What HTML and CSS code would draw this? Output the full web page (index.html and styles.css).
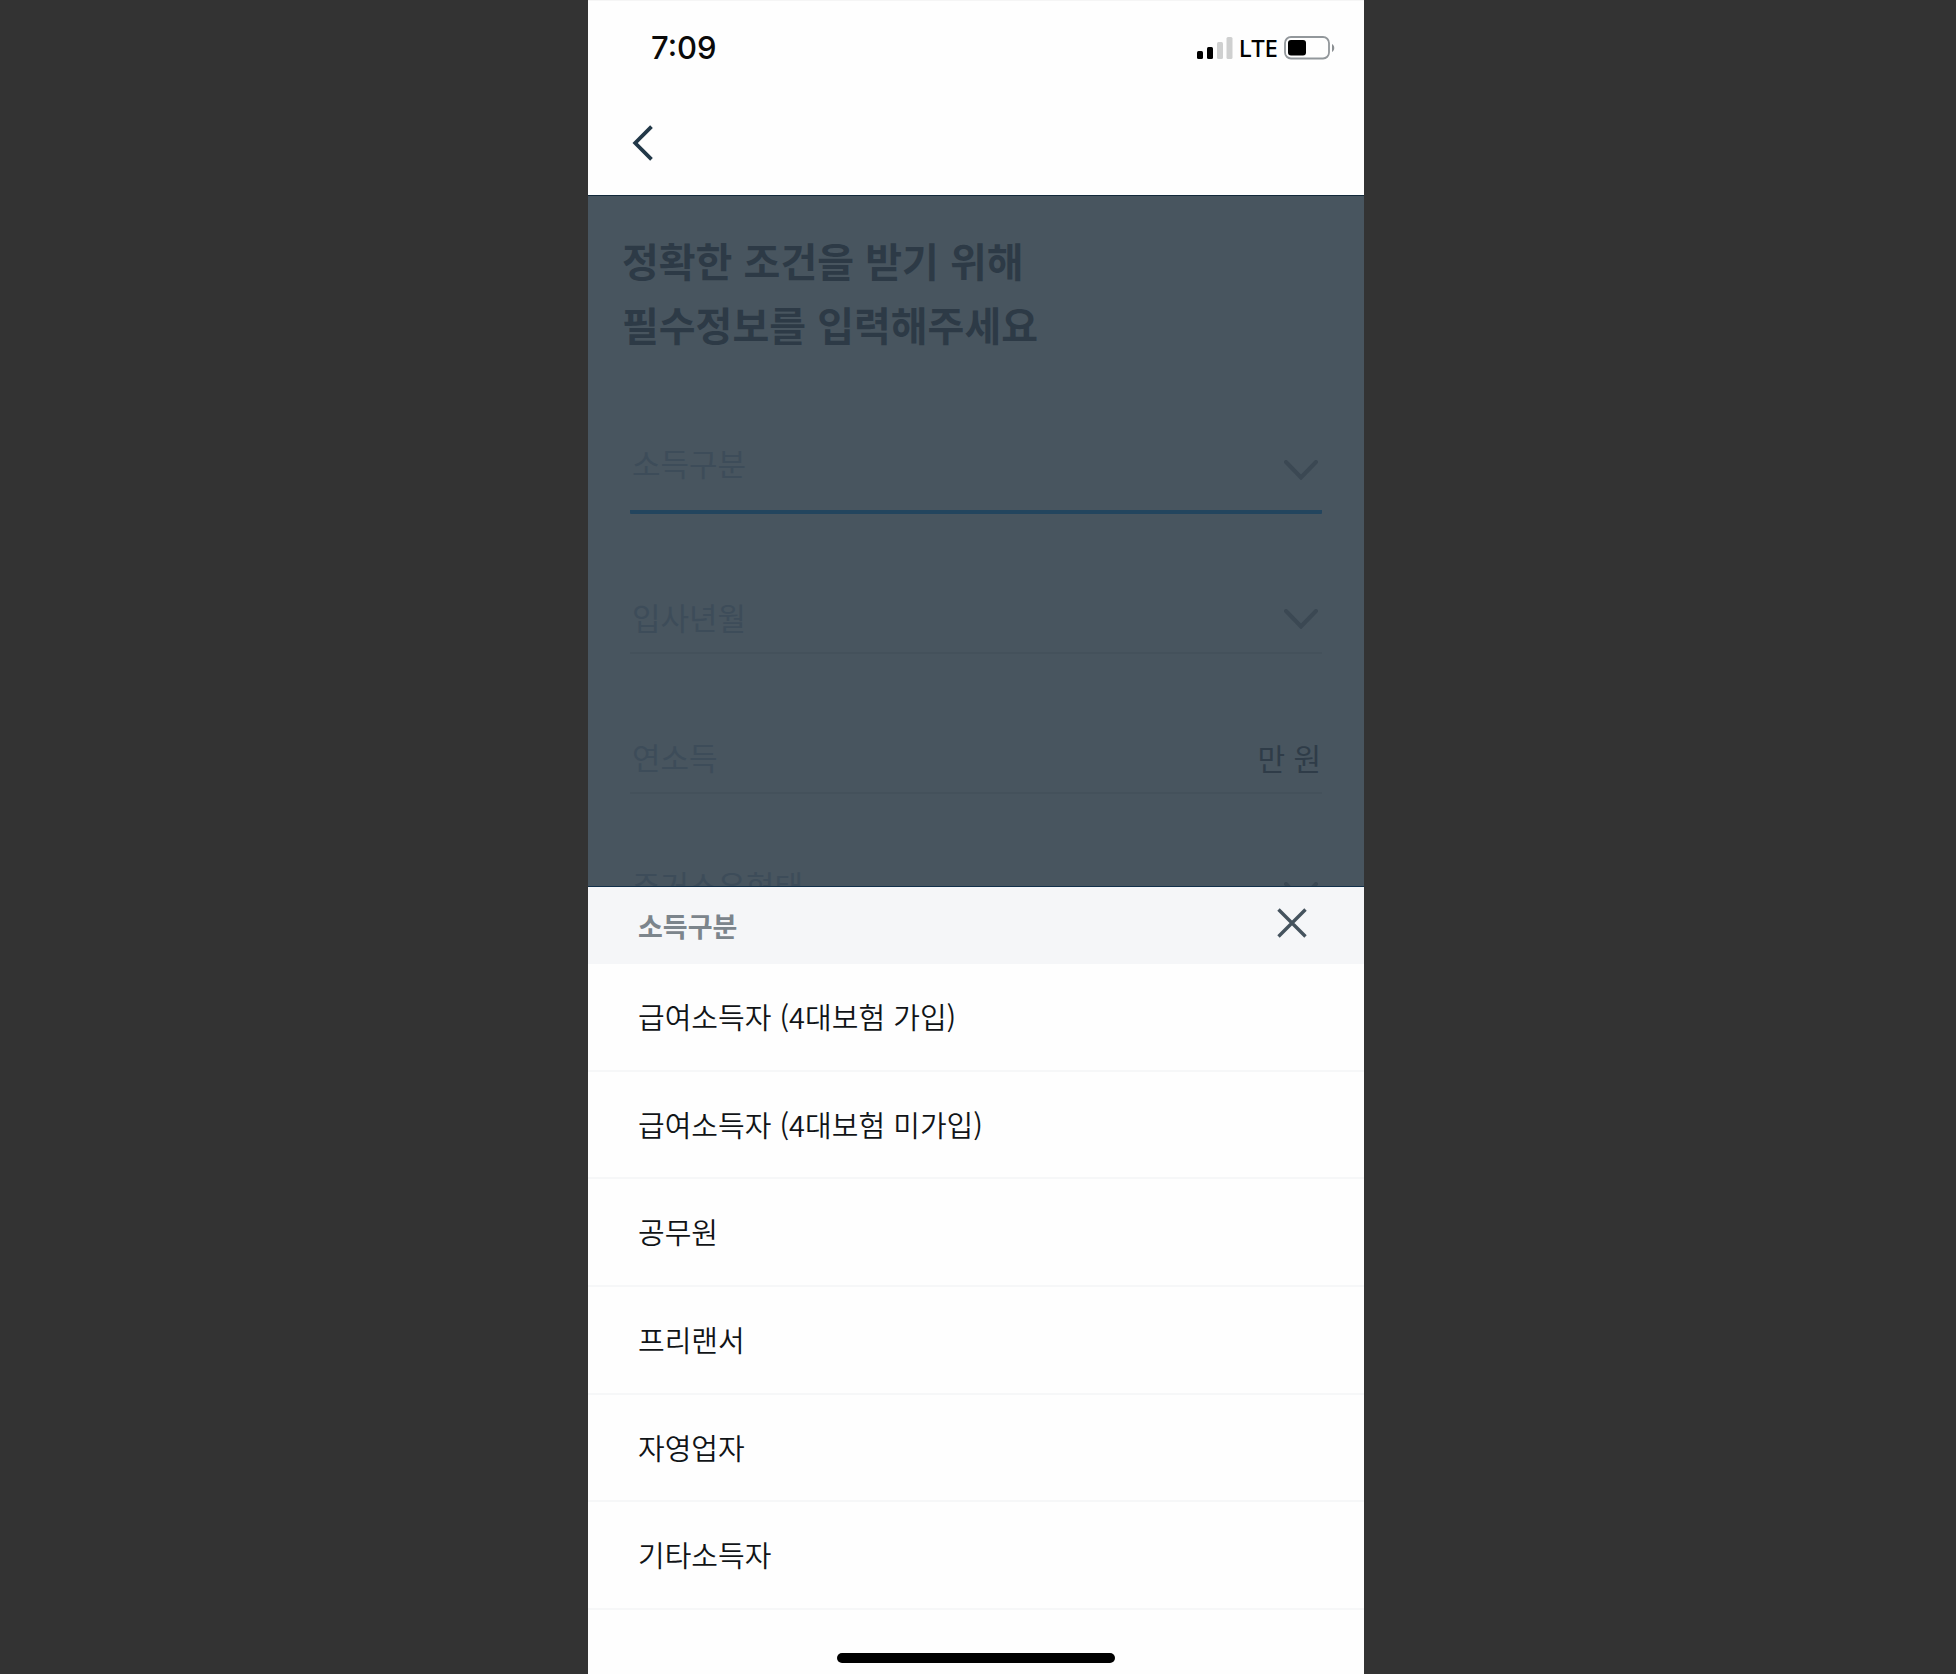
FILE: index.html
```html
<!DOCTYPE html>
<html lang="ko">
<head>
<meta charset="utf-8">
<meta name="viewport" content="width=device-width, initial-scale=1">
<title>필수정보 입력</title>
<link rel="stylesheet" href="styles.css">
</head>
<body>
<div class="phone">
  <header class="top">
    <div class="status">
      <span class="time">7:09</span>
      <div class="status-right">
        <svg width="36" height="22" viewBox="0 0 36 22" aria-hidden="true">
          <rect x="0" y="14" width="6" height="8" rx="1.5" fill="#000"/>
          <rect x="10" y="10" width="6" height="12" rx="1.5" fill="#000"/>
          <rect x="20" y="5" width="6" height="17" rx="1.5" fill="#cfd0d0"/>
          <rect x="29.500" y="0" width="6" height="22" rx="1.5" fill="#cfd0d0"/>
        </svg>
        <span class="network">LTE</span>
        <svg width="52" height="24" viewBox="0 0 52 24" aria-hidden="true">
          <rect x="1" y="1" width="44" height="21.500" rx="6" fill="none" stroke="#92979b" stroke-width="1.800"/>
          <rect x="4" y="4" width="18" height="15.500" rx="3" fill="#000"/>
          <path d="M48 8c3 1.500 3 6.500 0 8z" fill="#8b8f92"/>
        </svg>
      </div>
    </div>
    <nav class="nav">
      <button class="icon-button" type="button" aria-label="뒤로">
        <svg width="22" height="36" viewBox="0 0 22 36" fill="none" stroke="#223848" stroke-width="3.800" aria-hidden="true"><path d="M19.500 1.700 3.200 18l16.300 16.300"/></svg>
      </button>
    </nav>
  </header>

  <main class="form-area">
    <h1 class="title">정확한 조건을 받기 위해<br>필수정보를 입력해주세요</h1>
    <form class="fields">
      <div class="field field-tall field-active">
        <select class="control" aria-label="소득구분"><option>소득구분</option></select>
        <svg class="chevron" width="34" height="20" viewBox="0 0 34 20" aria-hidden="true"><path d="M2 2l15 15.500L32 2"/></svg>
      </div>
      <div class="field">
        <select class="control" aria-label="입사년월"><option>입사년월</option></select>
        <svg class="chevron" width="34" height="20" viewBox="0 0 34 20" aria-hidden="true"><path d="M2 2l15 15.500L32 2"/></svg>
      </div>
      <div class="field field-amount">
        <input class="control" id="income" type="text" placeholder="연소득" aria-label="연소득">
        <label class="unit" for="income">만 원</label>
      </div>
      <div class="field field-tall">
        <select class="control" aria-label="주거소유형태"><option>주거소유형태</option></select>
        <svg class="chevron" width="34" height="20" viewBox="0 0 34 20" aria-hidden="true"><path d="M2 2l15 15.500L32 2"/></svg>
      </div>
    </form>
  </main>

  <div class="sheet-head">
    <h2 class="sheet-title">소득구분</h2>
    <button class="icon-button" type="button" aria-label="닫기">
      <svg width="30" height="30" viewBox="0 0 30 30" fill="none" stroke="#45535e" stroke-width="3.400" aria-hidden="true"><path d="M1.500 1.500l27 27M28.500 1.500l-27 27"/></svg>
    </button>
  </div>
  <ul class="options">
    <li class="option"><button class="option-button" type="button">급여소득자 (4대보험 가입)</button></li>
    <li class="option"><button class="option-button" type="button">급여소득자 (4대보험 미가입)</button></li>
    <li class="option"><button class="option-button" type="button">공무원</button></li>
    <li class="option"><button class="option-button" type="button">프리랜서</button></li>
    <li class="option"><button class="option-button" type="button">자영업자</button></li>
    <li class="option"><button class="option-button" type="button">기타소득자</button></li>
  </ul>
  <footer class="home"><div class="home-bar"></div></footer>
</div>
</body>
</html>
```

FILE: styles.css
```css
* {
  box-sizing: border-box;
}

body {
  margin: 0;
  padding-right: 4px;
  background: #333;
  font-family: "Noto Sans CJK KR", "Noto Sans", sans-serif;
}

button,
select,
input {
  margin: 0;
  padding: 0;
  border: 0;
  border-radius: 0;
  background: none;
  font: inherit;
  color: inherit;
  appearance: none;
}

svg {
  display: block;
}

.phone {
  display: grid;
  grid-template-rows: auto minmax(0, 15fr) auto minmax(0, 14fr) auto;
  width: 100%;
  max-width: 776px;
  height: 100vh;
  margin: 0 auto;
  background: #fefefe;
}

/* Status bar and navigation */

.top {
  border-top: 1px solid #f5f5f5;
}

.status {
  display: flex;
  align-items: center;
  justify-content: space-between;
  height: 94px;
  padding: 0 28px 0 63px;
}

.time {
  font: 500 31px/40px Inter, sans-serif;
  color: #0a0a0a;
}

.status-right {
  display: flex;
  align-items: center;
  gap: 6px;
}

.network {
  font: 500 24px/32px "Noto Sans", sans-serif;
  color: #000;
}

.nav {
  display: flex;
  align-items: center;
  height: 100px;
  padding: 0 44px 4px;
}

/* Dimmed form */

.form-area {
  overflow: hidden;
  padding: 32px 42px 0;
  border-top: 1px solid #12293a;
  border-bottom: 1px solid #12304a;
  background: #48555f;
}

.title {
  margin: 0 -8px;
  font-size: 40px;
  font-weight: 700;
  line-height: 64px;
  color: #2d3a46;
}

.fields {
  padding-top: 16px;
}

.field {
  display: flex;
  align-items: center;
  height: 140px;
  padding: 68px 4px 0 2px;
  border-bottom: 2px solid #44515b;
  font-size: 31px;
}

.field-tall {
  padding-top: 44px;
}

.field-active {
  height: 142px;
  border-bottom: 4px solid #23455e;
  border-radius: 1px;
}

.field-amount {
  padding-right: 1px;
}

.control {
  flex: 1;
  min-width: 0;
  height: 46px;
  line-height: 46px;
  color: #3d4c59;
}

.control::placeholder {
  color: #3d4c59;
  opacity: 1;
}

.chevron {
  margin-top: 4px;
  fill: none;
  stroke: #3b4853;
  stroke-width: 4;
  stroke-linecap: round;
}

.field-tall .chevron {
  margin-top: 14px;
}

.unit {
  font-size: 30px;
  color: #2f3c48;
}

/* Bottom sheet */

.sheet-head {
  display: flex;
  align-items: center;
  justify-content: space-between;
  height: 77px;
  padding: 0 57px 0 50px;
  background: #f5f6f8;
}

.sheet-head .icon-button {
  padding-bottom: 6px;
}

.sheet-title {
  margin: 0;
  font-size: 27px;
  font-weight: 700;
  line-height: 40px;
  color: #7c858c;
}

.options {
  display: grid;
  grid-auto-rows: 1fr;
  margin: 0;
  padding: 0;
  list-style: none;
}

.option {
  display: flex;
  border-bottom: 2px solid #f6f7f8;
}

.option-button {
  flex: 1;
  padding: 0 50px 2px;
  font-size: 29px;
  font-weight: 350;
  line-height: 42px;
  text-align: left;
  color: #111417;
}

.home {
  display: flex;
  align-items: flex-end;
  justify-content: center;
  height: 64px;
  padding-bottom: 11px;
}

.home-bar {
  width: 278px;
  height: 10px;
  border-radius: 5px;
  background: #000;
}
```
